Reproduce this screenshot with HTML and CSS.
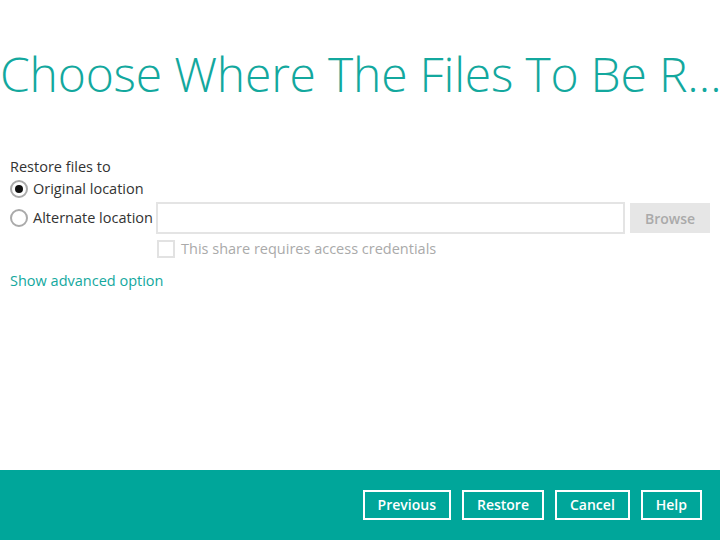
FILE: index.html
```html
<!DOCTYPE html>
<html>
<head>
<meta charset="utf-8">
<link rel="stylesheet" href="styles.css">
</head>
<body>
<div class="page">
  <main class="content">
    <h1 class="title">Choose Where The Files To Be R…</h1>
    <div class="form">
      <div class="label">Restore files to</div>
      <label class="radio-row">
        <span class="radio checked"></span>
        <span>Original location</span>
      </label>
      <div class="alt-row">
        <label class="radio-row">
          <span class="radio"></span>
          <span>Alternate location</span>
        </label>
        <div class="path-input"></div>
        <div class="browse">Browse</div>
      </div>
      <div class="cred-row">
        <span class="checkbox"></span>
        <span>This share requires access credentials</span>
      </div>
      <a class="advanced">Show advanced option</a>
    </div>
  </main>
  <footer class="footer">
    <div class="btn">Previous</div>
    <div class="btn">Restore</div>
    <div class="btn">Cancel</div>
    <div class="btn">Help</div>
  </footer>
</div>
</body>
</html>
```

FILE: styles.css
```css
html, body {
  margin: 0;
  padding: 0;
}
body {
  width: 720px;
  height: 540px;
  font-family: "Open Sans", "Noto Sans", sans-serif;
  font-size: 14.5px;
  color: #333;
  background: #fff;
  overflow: hidden;
}
.page {
  display: flex;
  flex-direction: column;
  height: 540px;
}
.content {
  flex: 1;
}
.title {
  margin: 0;
  padding: 42px 0 0 0;
  font-weight: 300;
  font-size: 48px;
  line-height: 64px;
  color: #13a89e;
  white-space: nowrap;
  width: 720px;
  letter-spacing: -0.2px;
}
.form {
  padding: 51px 10px 0 10px;
}
.label {
  line-height: 20px;
  height: 20px;
}
.radio-row {
  display: flex;
  align-items: center;
  gap: 5px;
  line-height: 20px;
  white-space: nowrap;
  flex-shrink: 0;
}
.form > .radio-row {
  margin-top: 2px;
}
.radio {
  width: 14px;
  height: 14px;
  border: 2px solid #aaa;
  border-radius: 50%;
  box-sizing: content-box;
  display: flex;
  align-items: center;
  justify-content: center;
  background: #fff;
  flex-shrink: 0;
}
.radio.checked::after {
  content: "";
  width: 8px;
  height: 8px;
  border-radius: 50%;
  background: #111;
}
.alt-row {
  display: flex;
  align-items: center;
  margin-top: 3px;
}
.path-input {
  margin-left: 3px;
  flex: 1;
  min-width: 0;
  height: 28px;
  border: 2px solid #e4e4e4;
}
.browse {
  margin-left: 5px;
  width: 80px;
  flex-shrink: 0;
  height: 30px;
  background: #e6e6e6;
  color: #aaa;
  font-weight: 600;
  font-size: 14px;
  display: flex;
  align-items: center;
  justify-content: center;
}
.cred-row {
  display: flex;
  align-items: center;
  gap: 6px;
  margin: 5px 0 0 147px;
  color: #aaa;
  line-height: 20px;
  white-space: nowrap;
}
.checkbox {
  width: 14px;
  height: 14px;
  border: 2px solid #e2e2e2;
  box-sizing: content-box;
}
.advanced {
  display: block;
  margin-top: 12px;
  color: #13a89e;
  line-height: 20px;
}
.footer {
  height: 70px;
  background: #00a69a;
  display: flex;
  align-items: center;
  justify-content: flex-end;
  gap: 11px;
  padding-right: 18px;
}
.btn {
  border: 2px solid #fff;
  color: #fff;
  font-weight: 600;
  font-size: 14px;
  height: 26px;
  padding: 0 13px;
  display: flex;
  align-items: center;
  line-height: 20px;
}
```
